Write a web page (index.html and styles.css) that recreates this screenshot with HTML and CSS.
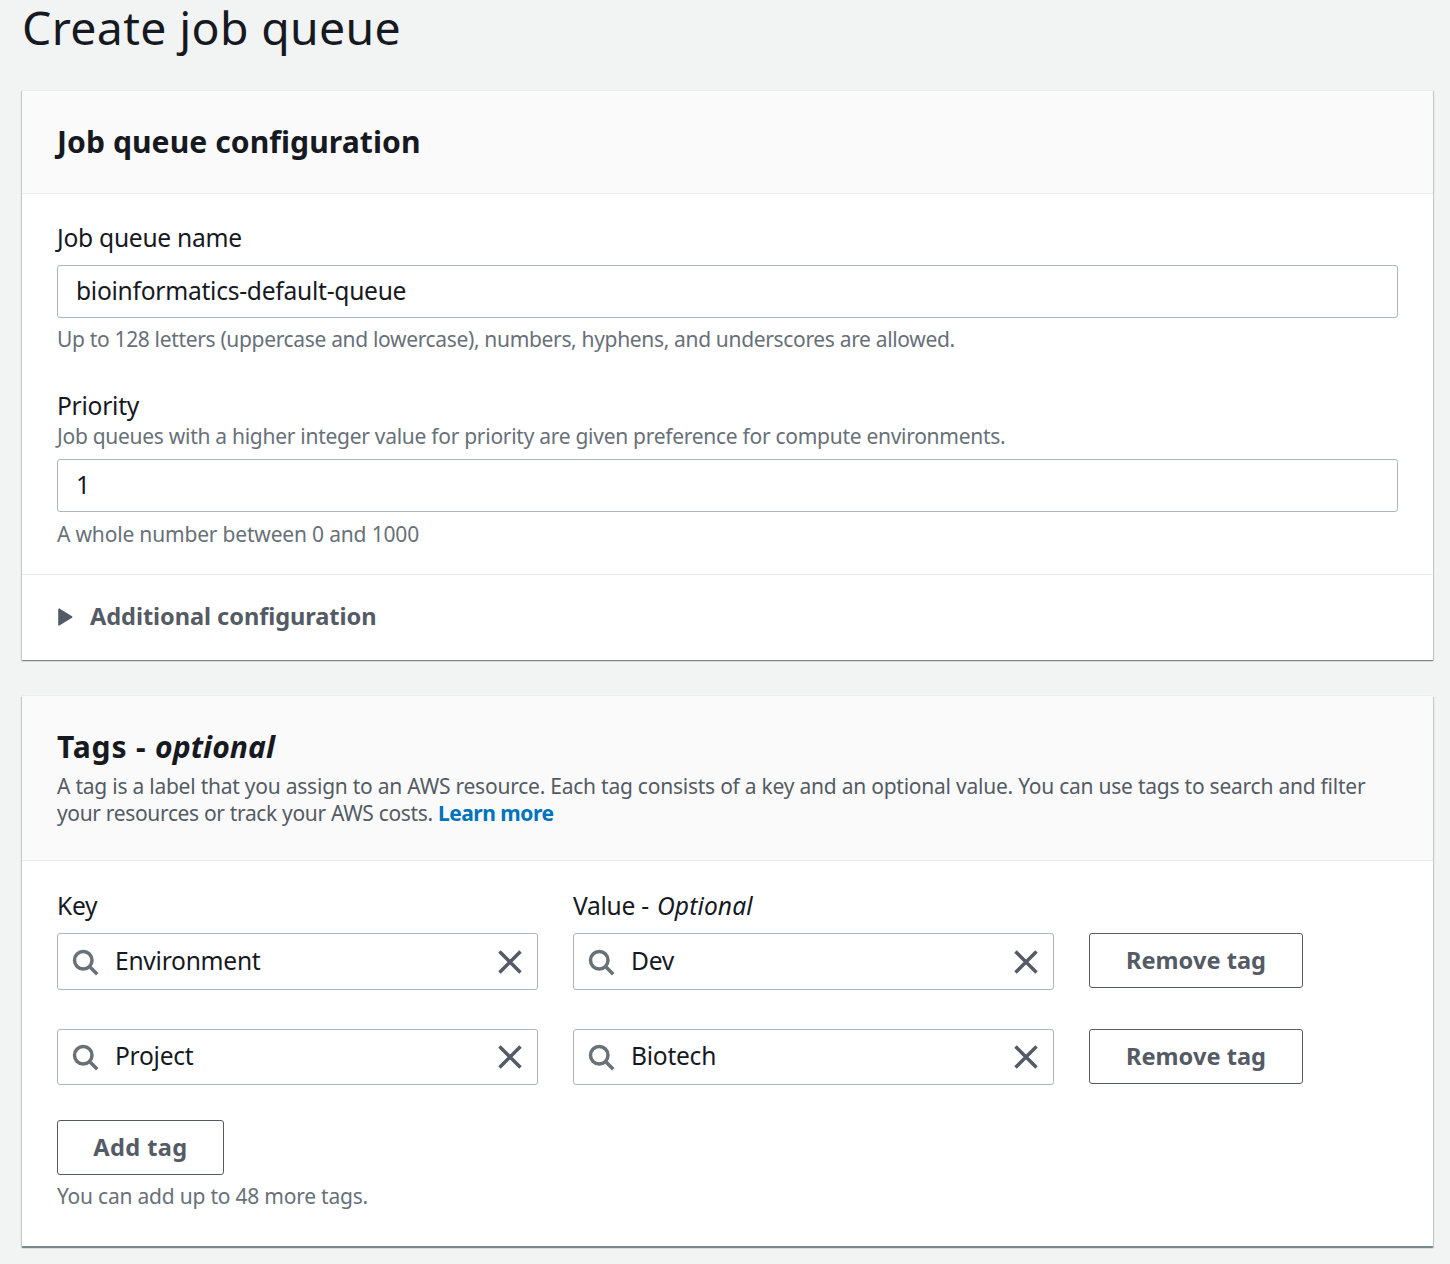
FILE: index.html
```html
<!DOCTYPE html>
<html lang="en">
<head>
<meta charset="utf-8">
<title>Create job queue</title>
<link rel="stylesheet" href="styles.css">
</head>
<body>
<svg class="defs" width="0" height="0" aria-hidden="true">
  <symbol id="search" viewBox="0 0 16 16"><circle cx="7" cy="7" r="5"/><path d="M11 11l4 4"/></symbol>
  <symbol id="close" viewBox="0 0 16 16"><path d="M2 2l12 12M14 2L2 14"/></symbol>
</svg>
<main class="page">
  <h1 class="page-title">Create job queue</h1>

  <section class="card">
    <header class="card-header">
      <h2 class="card-title">Job queue configuration</h2>
    </header>
    <div class="card-body">
      <div class="field">
        <label class="label" for="name">Job queue name</label>
        <input class="input" id="name" type="text" value="bioinformatics-default-queue">
        <p class="hint hint-name">Up to 128 letters (uppercase and lowercase), numbers, hyphens, and underscores are allowed.</p>
      </div>
      <div class="field field-priority">
        <label class="label" for="priority">Priority</label>
        <p class="description">Job queues with a higher integer value for priority are given preference for compute environments.</p>
        <input class="input" id="priority" type="text" value="1">
        <p class="hint hint-priority">A whole number between 0 and 1000</p>
      </div>
    </div>
    <div class="expander">
      <svg class="caret" viewBox="0 0 16 18"><path d="M2 1.2L14.6 9L2 16.8Z"/></svg>
      <span class="expander-label">Additional configuration</span>
    </div>
  </section>

  <section class="card card-tags">
    <header class="card-header header-tags">
      <h2 class="card-title"><span class="title-lead">Tags - </span><i>optional</i></h2>
      <p class="card-description">A tag is a label that you assign to an AWS resource. Each tag consists of a key and an optional value. You can use tags to search and filter<br><span class="description-end">your resources or track your AWS costs. </span><a class="link" href="#">Learn more</a></p>
    </header>
    <div class="tags-body">
      <div class="tag-row tag-labels">
        <span class="label">Key</span>
        <span class="label label-value">Value - <i>Optional</i></span>
      </div>
      <div class="tag-row">
        <div class="search"><svg class="icon"><use href="#search"/></svg><span class="value">Environment</span><svg class="icon icon-close"><use href="#close"/></svg></div>
        <div class="search"><svg class="icon"><use href="#search"/></svg><span class="value">Dev</span><svg class="icon icon-close"><use href="#close"/></svg></div>
        <button class="button">Remove tag</button>
      </div>
      <div class="tag-row tag-row-second">
        <div class="search"><svg class="icon"><use href="#search"/></svg><span class="value">Project</span><svg class="icon icon-close"><use href="#close"/></svg></div>
        <div class="search"><svg class="icon"><use href="#search"/></svg><span class="value">Biotech</span><svg class="icon icon-close"><use href="#close"/></svg></div>
        <button class="button">Remove tag</button>
      </div>
      <button class="button button-add">Add tag</button>
      <p class="hint hint-tags">You can add up to 48 more tags.</p>
    </div>
  </section>
</main>
</body>
</html>
```

FILE: styles.css
```css
* {
  box-sizing: border-box;
}

body {
  margin: 0;
  background: #f2f3f3;
  color: #16191f;
  font-family: "Noto Sans", "Open Sans", sans-serif;
  font-size: 24.6px;
  letter-spacing: -0.27px;
}

h1, h2, p {
  margin: 0;
}

.defs {
  display: block;
}

.page {
  padding: 0 17px 18px 22px;
}

.page-title {
  margin-bottom: 36px;
  font-size: 46.4px;
  font-weight: 400;
  line-height: 54px;
  letter-spacing: 0.35px;
}

.card {
  background: #fff;
  border-top: 1px solid #eaeded;
  box-shadow: 0 1px 1px rgba(0, 28, 36, 0.3), 1px 1px 1px rgba(0, 28, 36, 0.15), -1px 1px 1px rgba(0, 28, 36, 0.15);
}

.card-tags {
  margin-top: 35px;
  box-shadow: 0 2px 1px rgba(0, 28, 36, 0.3), 1px 2px 1px rgba(0, 28, 36, 0.15), -1px 2px 1px rgba(0, 28, 36, 0.15);
}

.card-header {
  padding: 31px 35px;
  background: #fafafa;
  border-bottom: 1px solid #eaeded;
}

.header-tags {
  padding-bottom: 33px;
}

.card-title {
  font-size: 30.1px;
  font-weight: 700;
  line-height: 40px;
  letter-spacing: 0.07px;
}

.title-lead {
  letter-spacing: 0.8px;
}

.card-description {
  margin-top: 6px;
  color: #545b64;
  font-size: 21px;
  line-height: 27px;
  letter-spacing: -0.235px;
  white-space: nowrap;
}

.description-end {
  letter-spacing: -0.34px;
}

.link {
  color: #0073bb;
  font-weight: 700;
  letter-spacing: -0.48px;
  text-decoration: none;
}

.card-body {
  padding: 27px 35px;
}

.field {
  display: flex;
  flex-direction: column;
}

.field-priority {
  margin-top: 37px;
}

.label {
  line-height: 34px;
}

.label-value i {
  margin-left: 2px;
  letter-spacing: 0.1px;
}

.input {
  width: 100%;
  height: 53px;
  margin-top: 10px;
  padding: 0 18px 2px;
  border: 1px solid #aab7b8;
  border-radius: 3px;
  background: #fff;
  color: #16191f;
  font: inherit;
  letter-spacing: inherit;
}

.hint,
.description {
  color: #687078;
  font-size: 21px;
  line-height: 26px;
  letter-spacing: -0.28px;
  white-space: nowrap;
}

.hint {
  margin-top: 8px;
}

.hint-name {
  letter-spacing: -0.335px;
}

.hint-priority {
  margin-top: 9px;
  letter-spacing: -0.18px;
}

.hint-tags {
  letter-spacing: -0.22px;
}

.expander {
  display: flex;
  align-items: center;
  height: 86px;
  padding: 0 35px 2px;
  border-top: 1px solid #eaeded;
  color: #545b64;
  font-size: 23.6px;
  font-weight: 700;
  letter-spacing: -0.07px;
}

.expander-label {
  padding-bottom: 2px;
}

.caret {
  width: 16px;
  height: 18px;
  margin-right: 17px;
  fill: #545b64;
  stroke: #545b64;
  stroke-width: 1.6;
  stroke-linejoin: round;
}

.tags-body {
  padding: 28px 35px 37px;
}

.tag-row {
  display: grid;
  grid-template-columns: 481px 481px 214px;
  column-gap: 35px;
  align-items: start;
}

.tag-labels {
  margin-bottom: 10px;
}

.tag-row-second {
  margin-top: 39px;
}

.search {
  display: flex;
  align-items: center;
  height: 57px;
  padding: 0 13px;
  border: 1px solid #aab7b8;
  border-radius: 3px;
}

.tag-row-second .search {
  height: 56px;
}

.value {
  flex: 1;
  margin-left: 16px;
  padding-bottom: 2px;
}

.tag-row-second .value {
  padding-bottom: 3px;
}

.icon {
  width: 28px;
  height: 28px;
  fill: none;
  stroke: #687078;
  stroke-width: 2;
}

.icon-close {
  stroke: #545b64;
}

.button {
  width: 214px;
  height: 55px;
  padding: 0 0 2px;
  border: 1px solid #545b64;
  border-radius: 3px;
  background: #fff;
  color: #545b64;
  font: inherit;
  font-size: 23.6px;
  font-weight: 700;
  letter-spacing: 0.03px;
}

.button-add {
  display: block;
  width: 167px;
  margin-top: 35px;
  letter-spacing: 0.4px;
}
```
